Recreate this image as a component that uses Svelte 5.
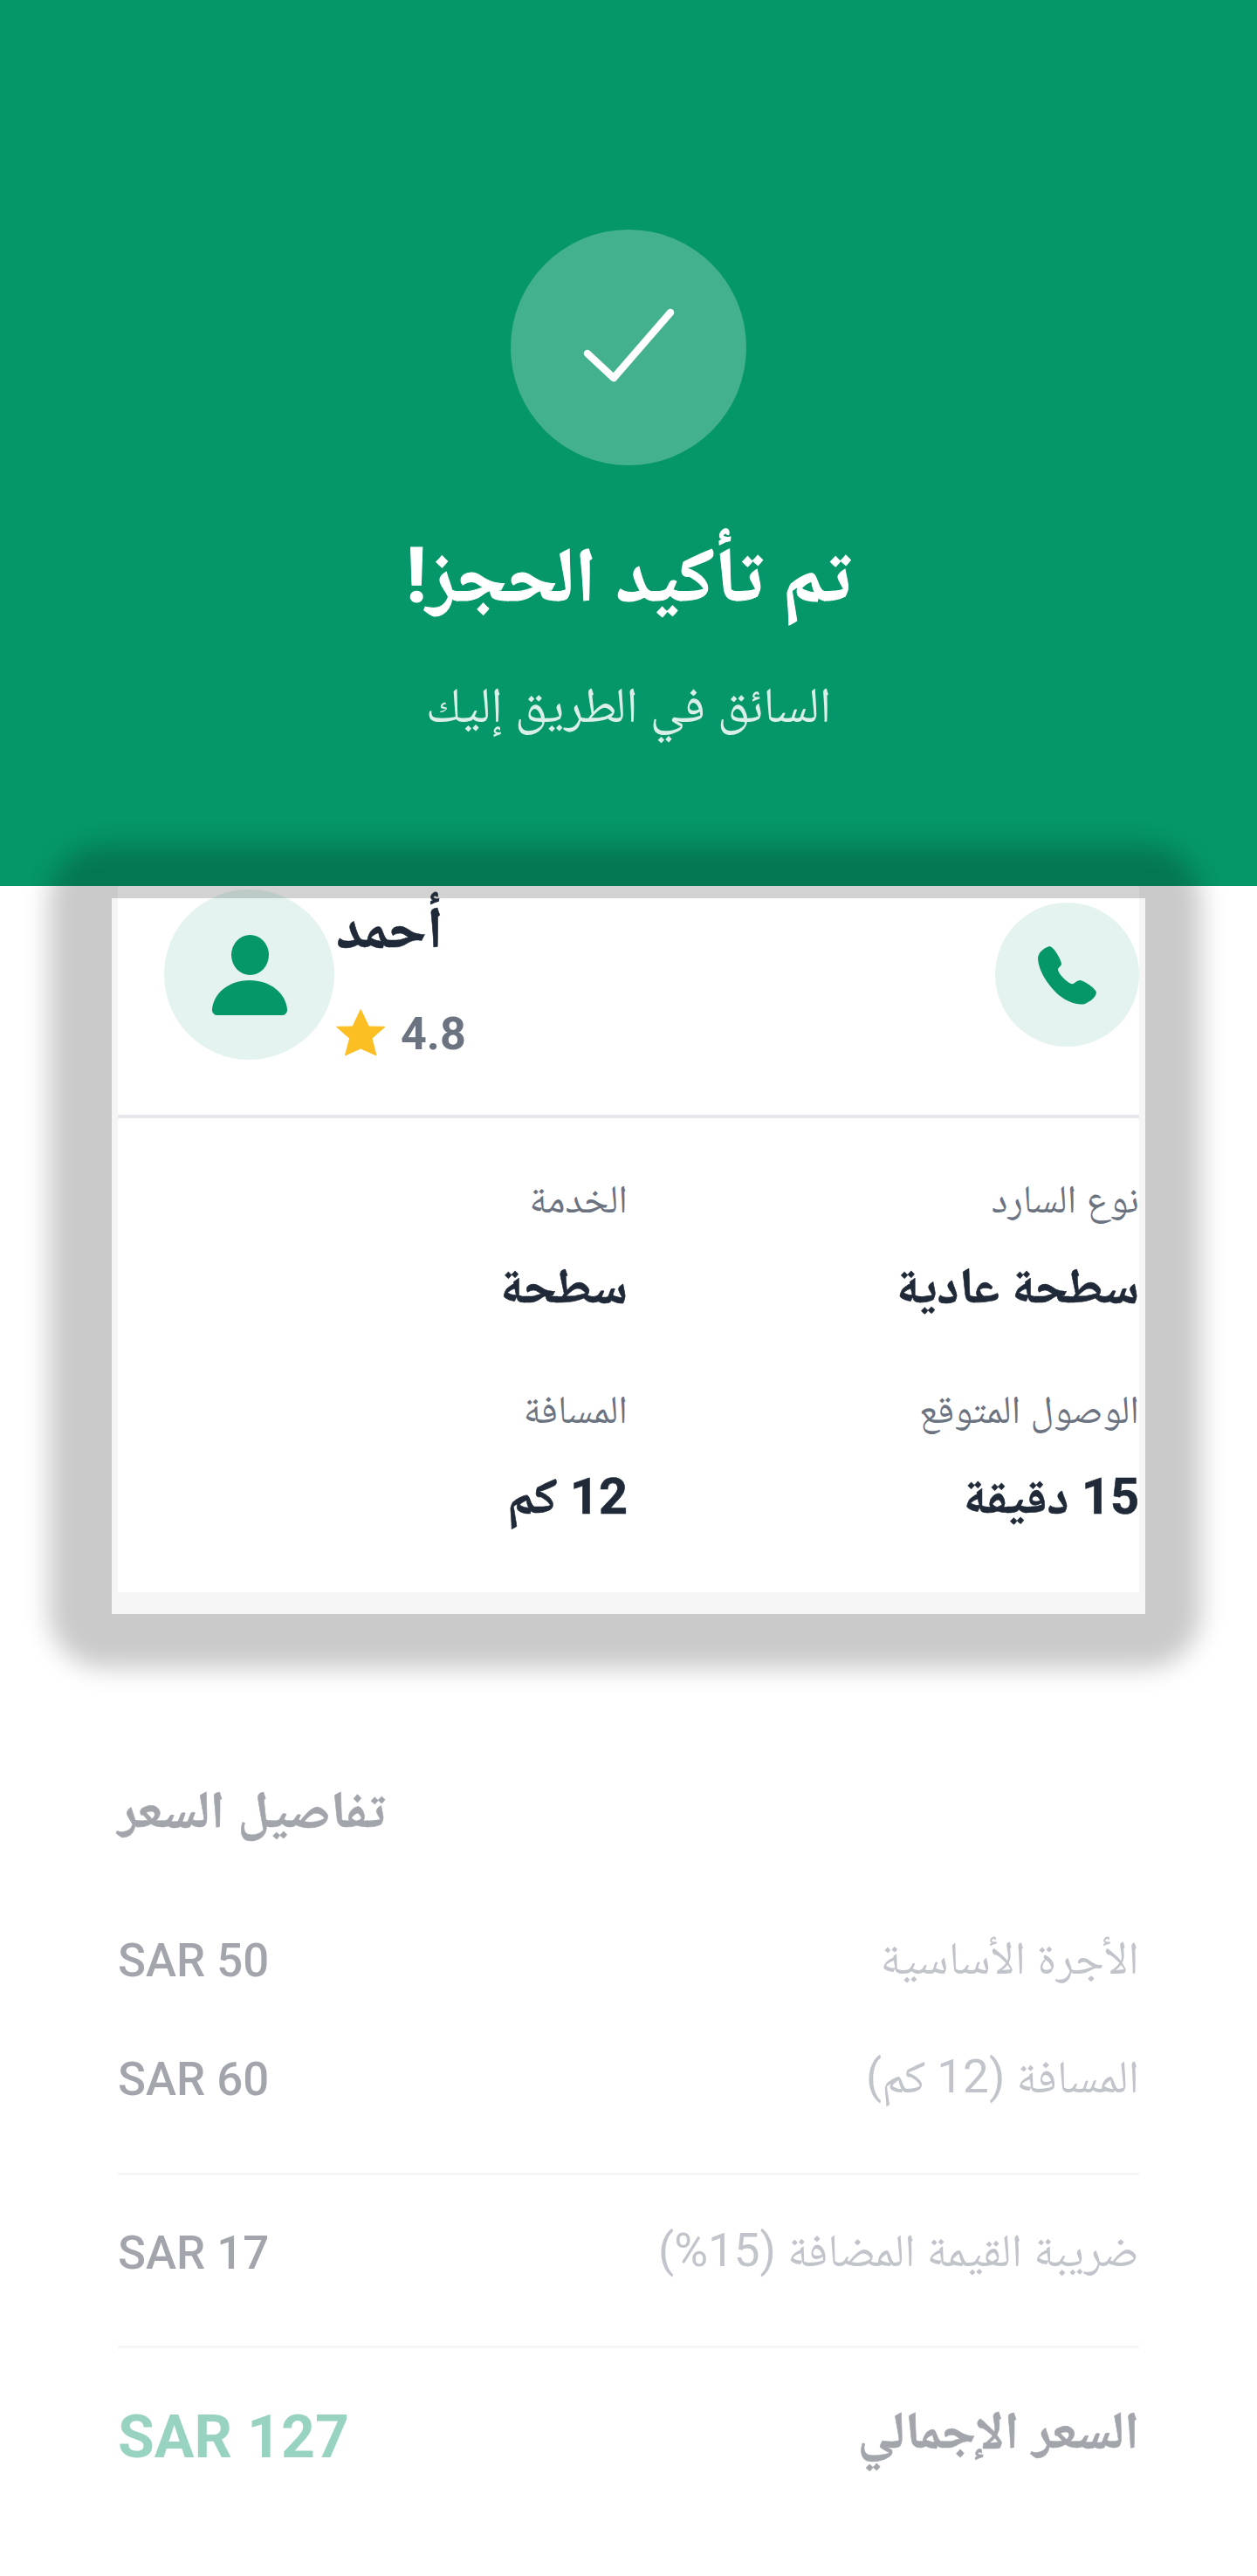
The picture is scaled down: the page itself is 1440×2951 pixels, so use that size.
<script>
  const details = [
    { label: 'نوع السارد', value: 'سطحة عادية' },
    { label: 'الخدمة', value: 'سطحة' },
    { label: 'الوصول المتوقع', value: '15 دقيقة' },
    { label: 'المسافة', value: '12 كم' }
  ];
  const lines = [
    { label: 'الأجرة الأساسية', value: 'SAR 50' },
    { label: 'المسافة (12 كم)', value: 'SAR 60' }
  ];
</script>

<div class="page" dir="rtl">
  <header class="hero">
    <div class="badge">
      <svg width="110" height="92" viewBox="0 0 110 92" fill="none" stroke="#fff" stroke-width="8.500" stroke-linecap="round" stroke-linejoin="round">
        <path d="M8 53 L38 81 L103 6" />
      </svg>
    </div>
    <h1>تم تأكيد الحجز!</h1>
    <p>السائق في الطريق إليك</p>
  </header>

  <section class="card">
    <div class="surface">
      <div class="inner">
        <div class="driver" dir="ltr">
          <div class="who">
            <div class="avatar">
              <svg width="86" height="92" viewBox="0 0 86 92" fill="#059669">
                <ellipse cx="43.500" cy="23" rx="21.500" ry="23" />
                <path d="M0 85 C2 66 20 52 43 52 C66 52 84 66 86 85 C86.400 89 83.500 92 80 92 L6 92 C2.500 92 -.4 89 0 85 Z" />
              </svg>
            </div>
            <div class="info">
              <div class="name" dir="rtl">أحمد</div>
              <div class="rating">
                <svg width="57" height="54" viewBox="0 0 57 54" fill="#fbbf24" stroke="#fbbf24" stroke-width="1" stroke-linejoin="round">
                  <path d="M28.200 .6 L37.500 20 L56 20.300 L41 33.500 L46 53 L28.200 45 L10.500 53 L15.500 33.500 L.6 20.300 L19 20 Z" />
                </svg>
                <span>4.8</span>
              </div>
            </div>
          </div>
          <div class="call">
            <svg width="75" height="72" viewBox="0 0 75 72" fill="#059669">
              <path d="M17 3 C11 5 4 10 4 17 C5 33 17 49 28 59 C38 67 50 71 58 69 C64 66 70 62 71 56 C71 52 57 42 52 42 C48 42 46 47 42 46 C36 43 28 35 27 30 C27 27 31 26 31 23 C31 19 22 3 17 3 Z" />
            </svg>
          </div>
        </div>
        <div class="grid">
          {#each details as d}
            <div class="cell">
              <div class="label">{d.label}</div>
              <div class="value">{d.value}</div>
            </div>
          {/each}
        </div>
      </div>
    </div>
  </section>

  <section class="price">
    <h2>تفاصيل السعر</h2>
    {#each lines as l}
      <div class="line">
        <span class="k">{l.label}</span>
        <span class="v">{l.value}</span>
      </div>
    {/each}
    <div class="line rule">
      <span class="k">ضريبة القيمة المضافة (15%)</span>
      <span class="v">SAR 17</span>
    </div>
    <div class="line total">
      <span class="k">السعر الإجمالي</span>
      <span class="v">SAR 127</span>
    </div>
  </section>
</div>

<style>
  :global(body) {
    margin: 0;
    background: #fff;
  }
  .page {
    width: 1440px;
    height: 2951px;
    overflow: hidden;
    background: #fff;
    font-family: Roboto, "Noto Naskh Arabic", "DejaVu Sans", sans-serif;
    color: #1f2937;
  }
  .hero {
    height: 1015px;
    box-sizing: border-box;
    padding-top: 263px;
    background: #059669;
    display: flex;
    flex-direction: column;
    align-items: center;
    color: #fff;
  }
  .badge {
    width: 270px;
    height: 270px;
    border-radius: 50%;
    background: rgba(255, 255, 255, 0.25);
    display: flex;
    align-items: center;
    justify-content: center;
  }
  h1 {
    margin: 66px 0 0;
    font-size: 88px;
    line-height: 120px;
    font-weight: 700;
    -webkit-text-stroke: 1px #fff;
  }
  .hero p {
    margin: 53px 0 0;
    font-size: 57px;
    line-height: 72px;
    opacity: 0.85;
  }
  .card {
    position: relative;
    z-index: 0;
    margin: 14px 128px 0;
  }
  .card::before {
    content: "";
    position: absolute;
    z-index: -1;
    top: -60px;
    bottom: -62px;
    left: -72px;
    right: -64px;
    border-radius: 64px;
    background: rgba(0, 0, 0, 0.208);
    filter: blur(14px);
  }
  .surface {
    position: relative;
    background: #f5f5f5;
    padding: 0 7px 25px;
  }
  .surface::before {
    content: "";
    position: absolute;
    top: -14px;
    left: 7px;
    right: 7px;
    height: 14px;
    background: #d2d2d2;
  }
  .inner {
    position: relative;
    height: 795px;
    background: #fff;
  }
  .driver {
    box-sizing: border-box;
    height: 252px;
    padding: 0 0 0 53px;
    border-bottom: 4px solid #e5e7eb;
    display: flex;
    justify-content: space-between;
    align-items: flex-start;
  }
  .who {
    display: flex;
    margin-top: -10px;
    gap: 2px;
  }
  .avatar {
    width: 195px;
    height: 195px;
    border-radius: 50%;
    background: rgba(5, 150, 105, 0.11);
    display: flex;
    align-items: center;
    justify-content: center;
  }
  .info {
    display: flex;
    flex-direction: column;
    align-items: flex-start;
  }
  .name {
    margin-top: 2px;
    font-size: 67px;
    line-height: 84px;
    font-weight: 700;
    -webkit-text-stroke: 0.6px #1f2937;
  }
  .rating {
    margin-top: 46px;
    display: flex;
    align-items: center;
    gap: 18px;
    font-size: 52px;
    line-height: 60px;
    font-weight: 700;
    color: #6b7280;
  }
  .rating span {
    padding-top: 4px;
    margin-left: -1px;
  }
  .call {
    width: 165px;
    height: 165px;
    margin-top: 5px;
    border-radius: 50%;
    background: rgba(5, 150, 105, 0.11);
    display: flex;
    align-items: center;
    justify-content: center;
  }
  .grid {
    display: grid;
    grid-template-columns: 586px 584px;
    grid-auto-rows: 241px;
    padding-top: 63px;
  }
  .label {
    font-size: 45px;
    line-height: 60px;
    color: #6b7280;
  }
  .value {
    margin-top: 30px;
    font-size: 57.6px;
    line-height: 80px;
    font-weight: 700;
    -webkit-text-stroke: 0.6px #1f2937;
  }
  .price {
    padding: 185px 135px 0;
    opacity: 0.41;
  }
  h2 {
    margin: 0 0 64px;
    font-size: 60px;
    line-height: 80px;
    font-weight: 700;
    text-align: left;
    color: #1f2937;
    -webkit-text-stroke: 0.6px #1f2937;
  }
  .line {
    display: flex;
    align-items: center;
    justify-content: space-between;
    height: 136px;
  }
  .k {
    padding-top: 7px;
    font-size: 53px;
    color: #6b7280;
  }
  .v {
    font-size: 52.8px;
    font-weight: 500;
    color: #1f2937;
  }
  .rule {
    box-sizing: border-box;
    height: 201px;
    margin-top: 39px;
    padding-bottom: 17px;
    border-top: 3px solid #e5e7eb;
    border-bottom: 3px solid #e5e7eb;
  }
  .total {
    height: 204px;
  }
  .total .k {
    padding-top: 0;
    font-size: 60px;
    font-weight: 700;
    color: #1f2937;
    -webkit-text-stroke: 0.6px #1f2937;
  }
  .total .v {
    font-size: 68px;
    font-weight: 700;
    color: #059669;
  }
</style>
